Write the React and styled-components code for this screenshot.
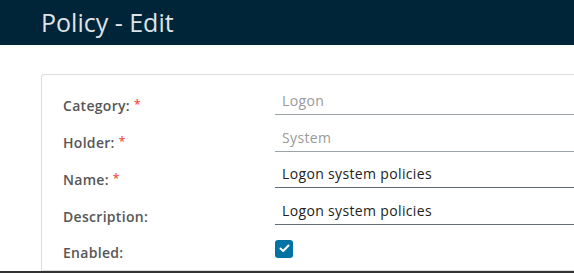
import React from "react";
import styled, { createGlobalStyle } from "styled-components";

const Global = createGlobalStyle`
  html, body { margin: 0; padding: 0; background: #fff; }
  body { font-family: "Open Sans", "Lato", sans-serif; overflow: hidden; }
`;

const Page = styled.div`
  height: 100vh;
  display: flex;
  flex-direction: column;
`;

const Header = styled.div`
  height: 45px;
  flex: none;
  background: #002538;
  display: flex;
  align-items: center;
  padding-left: 41px;
`;

const Title = styled.div`
  color: #dfe3e6;
  font-size: 25px;
  font-weight: 400;
  margin-top: -1px;
`;

const Main = styled.div`
  flex: 1;
  overflow: hidden;
  padding: 29px 0 0 41px;
`;

const Card = styled.div`
  border: 1px solid #dcdcdc;
  border-right: none;
  border-radius: 3px 0 0 0;
  padding: 11px 0 0 21px;
  height: 100%;
  box-sizing: border-box;
`;

const Row = styled.div`
  display: grid;
  grid-template-columns: 212px 1fr;
  height: 36.75px;
  align-items: center;
`;

const Label = styled.div`
  color: #565656;
  font-size: 14px;
  font-weight: 600;
  letter-spacing: 0.3px;
  padding-top: 3px;
`;

const Req = styled.span`
  color: #f54f47;
  font-size: 12px;
  margin-left: 4px;
  vertical-align: 2px;
`;

const Field = styled.div`
  height: 24px;
  margin-top: -4px;
  border-bottom: 1px solid ${(p) => (p.readOnly ? "#9aa3a8" : "#5f6d75")};
  color: ${(p) => (p.readOnly ? "#9a9a9a" : "#222")};
  font-size: 14px;
  letter-spacing: 0.35px;
  line-height: 22px;
  padding-left: 7px;
  white-space: nowrap;
`;

const Check = styled.div`
  width: 18px;
  height: 18px;
  border-radius: 3px;
  background: #0072a3;
  display: flex;
  align-items: center;
  justify-content: center;
  margin-top: -5px;
`;

const Footer = styled.div`
  height: 2px;
  flex: none;
  background: #333;
`;

const fields = [
  { label: "Category:", req: true, value: "Logon", readOnly: true },
  { label: "Holder:", req: true, value: "System", readOnly: true },
  { label: "Name:", req: true, value: "Logon system policies" },
  { label: "Description:", value: "Logon system policies" },
];

export default function App() {
  return (
    <>
      <Global />
      <Page>
        <Header>
          <Title>Policy - Edit</Title>
        </Header>
        <Main>
          <Card>
            {fields.map((f) => (
              <Row key={f.label}>
                <Label>
                  {f.label}
                  {f.req && <Req>*</Req>}
                </Label>
                <Field readOnly={f.readOnly}>{f.value}</Field>
              </Row>
            ))}
            <Row>
              <Label>Enabled:</Label>
              <Check>
                <svg width="11" height="9" viewBox="0 0 11 9">
                  <polyline points="1.5,4.5 4.2,7 9.5,1.5" fill="none" stroke="#fff" strokeWidth="2" strokeLinecap="round" strokeLinejoin="round" />
                </svg>
              </Check>
            </Row>
          </Card>
        </Main>
        <Footer />
      </Page>
    </>
  );
}
